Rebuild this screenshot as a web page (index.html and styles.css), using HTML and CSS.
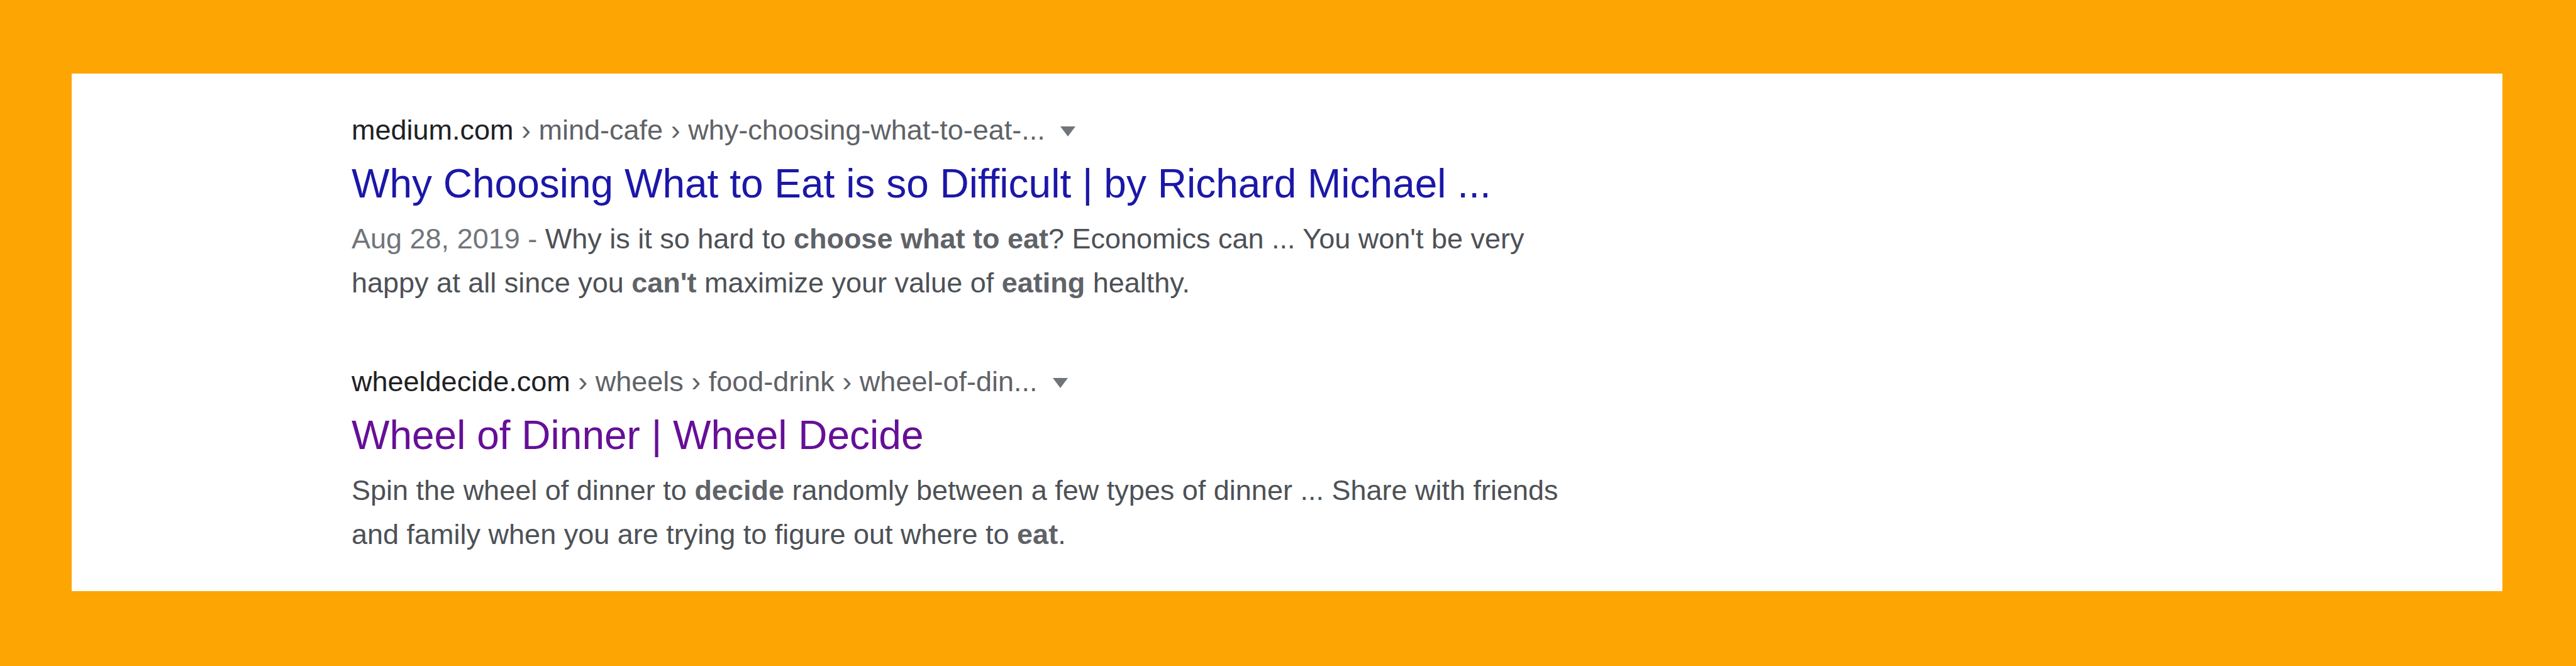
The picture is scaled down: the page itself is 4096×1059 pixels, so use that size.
FILE: index.html
```html
<!DOCTYPE html>
<html lang="en">
<head>
<meta charset="utf-8">
<title>Search results</title>
<link rel="stylesheet" href="styles.css">
</head>
<body>
<main class="results">
  <article class="result">
    <div class="source">
      <cite class="source-path"><span class="source-domain">medium.com</span> › mind-cafe › why-choosing-what-to-eat-...</cite>
      <button class="source-menu" type="button" aria-label="More options for medium.com">
        <svg class="caret" viewBox="0 0 24 16" aria-hidden="true"><path d="M0 0h24L12 16z"/></svg>
      </button>
    </div>
    <h3 class="title"><a class="title-link" href="#medium">Why Choosing What to Eat is so Difficult | by Richard Michael ...</a></h3>
    <p class="snippet"><span class="date">Aug 28, 2019 - </span>Why is it so hard to <b>choose what to eat</b>? Economics can ... You won't be very happy at all since you <b>can't</b> maximize your value of <b>eating</b> healthy.</p>
  </article>
  <article class="result">
    <div class="source">
      <cite class="source-path"><span class="source-domain">wheeldecide.com</span> › wheels › food-drink › wheel-of-din...</cite>
      <button class="source-menu" type="button" aria-label="More options for wheeldecide.com">
        <svg class="caret" viewBox="0 0 24 16" aria-hidden="true"><path d="M0 0h24L12 16z"/></svg>
      </button>
    </div>
    <h3 class="title"><a class="title-link title-link-seen" href="#wheeldecide">Wheel of Dinner | Wheel Decide</a></h3>
    <p class="snippet">Spin the wheel of dinner to <b>decide</b> randomly between a few types of dinner ... Share with friends and family when you are trying to figure out where to <b>eat</b>.</p>
  </article>
</main>
</body>
</html>
```
FILE: styles.css
```css
* {
  box-sizing: border-box;
}

body {
  margin: 0;
  padding: 117px 117px 117px 114px;
  background: #fda503;
  font-family: "Liberation Sans", Arial, sans-serif;
  font-size: 45px;
  color: #4d5156;
}

.results {
  display: flex;
  flex-direction: column;
  gap: 92px;
  padding: 60px 60px 55px 445px;
  background: #fff;
}

.result {
  max-width: 1960px;
}

.source {
  display: flex;
  align-items: center;
  gap: 24px;
  line-height: 60px;
}

.source-path {
  font-style: normal;
  color: #5f6368;
}

.source-domain {
  color: #202124;
}

.source-menu {
  display: flex;
  padding: 4px 0 0;
  border: 0;
  background: none;
  cursor: pointer;
}

.caret {
  width: 24px;
  height: 16px;
  fill: #70757a;
}

.title {
  margin: 14px 0 12px;
  font-size: 64px;
  font-weight: 400;
  line-height: 82px;
}

.title-link {
  color: #1b17a8;
  text-decoration: none;
}

.title-link-seen {
  color: #660f97;
}

.title-link:hover {
  text-decoration: underline;
}

.snippet {
  margin: 0;
  line-height: 70px;
}

.snippet b {
  color: #5f6368;
}

.date {
  color: #70757a;
}
```
